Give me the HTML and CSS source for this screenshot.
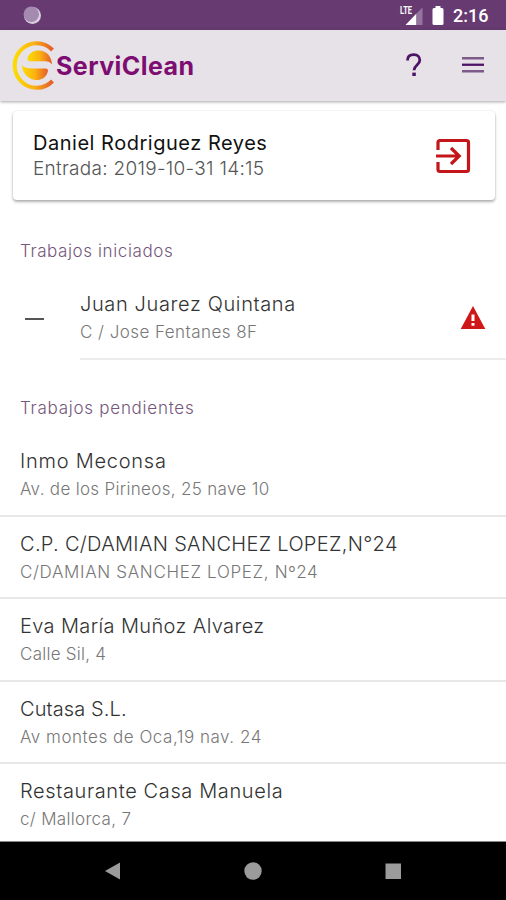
FILE: index.html
```html
<!DOCTYPE html>
<html lang="es">
<head>
  <meta charset="UTF-8">
  <title>ServiClean</title>
  <link rel="stylesheet" href="styles.css">
</head>
<body>
  <div class="statusbar">
    <svg class="status-dot" width="20" height="20" viewBox="0 0 20 20">
      <circle cx="10.5" cy="10.5" r="8.5" fill="#d9cfdf"/>
      <circle cx="9.3" cy="9.3" r="7.7" fill="#a48aae"/>
    </svg>
    <div class="status-icons">
      <svg width="24" height="22" viewBox="0 0 24 22">
        <path d="M5.500 20 16.500 8.500V20z" fill="#fff"/>
        <path d="M16.500 8.500 22.500 2.500V20h-6z" fill="#93759d"/>
        <text class="lte" x="0" y="9" textLength="12" lengthAdjust="spacingAndGlyphs">LTE</text>
      </svg>
      <svg class="battery" width="12" height="20" viewBox="0 0 12 20">
        <path d="M3.500 0h5v2H10q1.500 0 1.500 1.500v14Q11.500 19 10 19H2Q.5 19 .5 17.500v-14Q.5 2 2 2h1.500z" fill="#fff"/>
      </svg>
      <span class="clock">2:16</span>
    </div>
  </div>

  <header class="toolbar">
    <svg class="logo" width="42" height="50" viewBox="0 0 42 50">
      <defs>
        <linearGradient id="sun" x1="0" x2="1" y1="0" y2="0">
          <stop offset="0" stop-color="#fbdc00"/>
          <stop offset=".5" stop-color="#fbb212"/>
          <stop offset="1" stop-color="#e45c28"/>
        </linearGradient>
      </defs>
      <path d="M38.500 10A22 22.300 0 1 0 38.500 41" fill="none" stroke="url(#sun)" stroke-width="4"/>
      <path d="M13.500 18C15 13 20 10.300 25 10.500c8 .3 12.500 6 13 14-2.500-3-5-3.200-9-3.200H17c-2.500 0-4-.8-3.500-3.300z" fill="url(#sun)"/>
      <path d="M8 25c2 2.600 5 3.500 10 3.500h12.500c3.500 0 4 1.500 3 4C32 37.500 27.500 40 22.500 40 14.500 40 8 33 8 25z" fill="url(#sun)"/>
    </svg>
    <h1 class="brand">ServiClean</h1>
    <svg class="help" width="18" height="26" viewBox="0 0 18 26">
      <path d="M2.500 8.500C2.500 4.800 5 2.700 8.800 2.700s6 2.300 6 5.600c0 4.500-5.800 5-5.800 10" fill="none" stroke="#4c1464" stroke-width="2.800"/>
      <path d="M7.300 20.600h3.500V24H7.300z" fill="#4c1464"/>
    </svg>
    <svg class="menu" width="24" height="18" viewBox="0 0 24 18">
      <path d="M1 1h22v2.600H1zM1 14h22v2.600H1z" fill="#7c5b89"/>
      <path d="M1 7.600h22v2.300H1z" fill="#4c1464"/>
    </svg>
  </header>

  <main>
    <section class="card">
      <div>
        <h2 class="worker">Daniel Rodriguez Reyes</h2>
        <p class="entry">Entrada: 2019-10-31 14:15</p>
      </div>
      <svg width="36" height="36" viewBox="0 0 36 36" fill="none" stroke="#c4161a" stroke-width="3.200">
        <path d="M3 12V4.500q0-2 2-2H31.500q2 0 2 2v27q0 2-2 2H5q-2 0-2-2V24"/>
        <path d="M1 18h22.500M16 10l8.200 8-8.200 8"/>
      </svg>
    </section>

    <h3 class="list-title iniciados">Trabajos iniciados</h3>
    <div class="started">
      <span class="dash"></span>
      <div class="started-body">
        <div>
          <p class="name juan">Juan Juarez Quintana</p>
          <p class="address fentanes">C / Jose Fentanes 8F</p>
        </div>
        <svg width="26" height="24" viewBox="0 0 26 24">
          <path d="M13 0 25.300 23H.7z" fill="#cf1717"/>
          <path d="M11.500 8.500h3V15h-3zM11.500 17h3v2.800h-3z" fill="#fff"/>
        </svg>
      </div>
    </div>

    <h3 class="list-title pendientes">Trabajos pendientes</h3>
    <ul class="pending">
      <li>
        <p class="name inmo">Inmo Meconsa</p>
        <p class="address pirineos">Av. de los Pirineos, 25 nave 10</p>
      </li>
      <li>
        <p class="name damian">C.P. C/DAMIAN SANCHEZ LOPEZ,N°24</p>
        <p class="address sanchez">C/DAMIAN SANCHEZ LOPEZ, Nº24</p>
      </li>
      <li>
        <p class="name eva">Eva María Muñoz Alvarez</p>
        <p class="address sil">Calle Sil, 4</p>
      </li>
      <li>
        <p class="name cutasa">Cutasa S.L.</p>
        <p class="address oca">Av montes de Oca,19 nav. 24</p>
      </li>
      <li>
        <p class="name manuela">Restaurante Casa Manuela</p>
        <p class="address mallorca">c/ Mallorca, 7</p>
      </li>
    </ul>
  </main>

  <nav class="navbar">
    <svg width="18" height="20" viewBox="0 0 18 20"><path d="M1 10 16 1.500v17z" fill="#9b9b9b"/></svg>
    <svg width="18" height="20" viewBox="0 0 18 20"><circle cx="9" cy="10" r="8.700" fill="#9b9b9b"/></svg>
    <svg width="18" height="20" viewBox="0 0 18 20"><path d="M1.500 2.500H17V18H1.500z" fill="#9b9b9b"/></svg>
  </nav>
</body>
</html>
```
FILE: styles.css
```css
* {
  box-sizing: border-box;
}
body {
  display: flex;
  flex-direction: column;
  height: 900px;
  margin: 0;
  overflow: hidden;
  background: #fff;
  font-family: Inter, "Open Sans", sans-serif;
  font-weight: 300;
}
h1, h2, h3, p, ul {
  margin: 0;
  padding: 0;
  font-weight: 300;
  white-space: nowrap;
}
ul {
  list-style: none;
}
svg {
  display: block;
  flex: none;
  overflow: visible;
}

/* status bar */
.statusbar {
  display: flex;
  flex: none;
  justify-content: space-between;
  height: 30px;
  padding: 5px 18px 0 22px;
  background: #673b71;
}
.status-icons {
  display: flex;
}
.lte {
  fill: #fff;
  font: 700 10px Roboto, sans-serif;
}
.battery {
  margin: 1px 9px 0 8px;
}
.clock {
  width: 35px;
  color: #fff;
  font: 500 18px/22px Roboto, sans-serif;
}

/* toolbar */
.toolbar {
  position: relative;
  display: flex;
  flex: none;
  align-items: center;
  height: 71px;
  padding: 0 21px 1px 14px;
  background: #e7e1e8;
  box-shadow: 0 1px 3px rgba(0, 0, 0, .35);
}
.brand {
  flex: 1;
  margin: 2px 0 0;
  color: #7d0d70;
  font-size: 25px;
  font-weight: 700;
  letter-spacing: .45px;
}
.menu {
  margin-left: 38px;
}

main {
  flex: 1;
  min-height: 0;
  border-bottom: 1px solid #888;
}
.card {
  display: flex;
  align-items: center;
  justify-content: space-between;
  height: 89px;
  margin: 10px 11px 0 13px;
  padding: 0 24px 0 20px;
  border-radius: 4px;
  box-shadow: 0 2px 3px rgba(0, 0, 0, .3), 0 0 2px rgba(0, 0, 0, .12);
}
.worker {
  color: #111;
  font-size: 20px;
  font-weight: 400;
  letter-spacing: .52px;
  line-height: 26px;
}
.entry {
  color: #555;
  font-size: 19px;
  letter-spacing: .28px;
  line-height: 26px;
}

/* lists */
.list-title {
  color: #75577c;
  font-size: 17px;
  line-height: 24px;
}
.name {
  color: #333;
  font-size: 20px;
  line-height: 28px;
}
.address {
  color: #777;
  font-size: 17px;
  line-height: 28px;
}
.started {
  display: flex;
  height: 84px;
  margin-top: 13px;
  padding-left: 25px;
}
.dash {
  width: 19px;
  height: 2px;
  margin: 42px 36px 0 0;
  background: #555;
}
.started-body {
  display: flex;
  flex: 1;
  justify-content: space-between;
  align-items: center;
  padding: 2px 20px 0 0;
  border-bottom: 2px solid #ececec;
}
.pending {
  margin-top: 14px;
}
.pending li {
  height: 82.600px;
  padding: 13px 20px 0;
  border-bottom: 2px solid #e8e8e8;
}
.pending li:last-child {
  height: 77px;
  border: 0;
}

/* tracking */
.iniciados {
  margin: 39px 0 0 20px;
  letter-spacing: .6px;
}
.pendientes {
  margin: 36px 0 0 20px;
  letter-spacing: .74px;
}
.juan, .manuela {
  letter-spacing: .62px;
}
.fentanes {
  letter-spacing: .45px;
}
.inmo {
  letter-spacing: .75px;
}
.pirineos, .damian, .mallorca {
  letter-spacing: .32px;
}
.sanchez {
  letter-spacing: .66px;
}
.eva {
  letter-spacing: .38px;
}
.sil {
  letter-spacing: .25px;
}
.cutasa {
  letter-spacing: .1px;
}
.oca {
  letter-spacing: .52px;
}

/* android navigation */
.navbar {
  display: flex;
  flex: none;
  gap: 122px;
  justify-content: center;
  height: 58px;
  padding-top: 19px;
  background: #000;
}
```
